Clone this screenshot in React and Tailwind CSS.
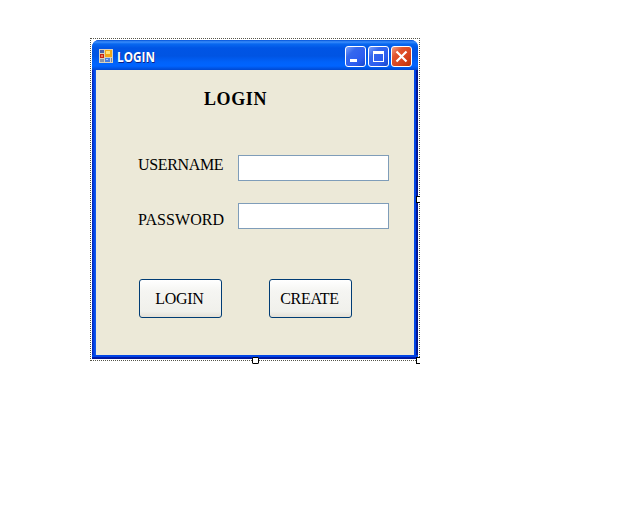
const serif = "font-['Liberation_Serif',serif] text-black whitespace-nowrap";

function CaptionButton({ danger, children }) {
  const tone = danger
    ? "bg-[linear-gradient(135deg,#f0a088_0%,#e2552f_30%,#d5401a_70%,#b93208_100%)]"
    : "bg-[linear-gradient(135deg,#7ba0fa_0%,#3568ee_30%,#2c5cf0_70%,#1846c8_100%)]";
  return (
    <button className={`h-[21px] w-[21px] rounded-[3px] border border-white ${tone}`}>
      <svg viewBox="0 0 19 19" className="block h-[19px] w-[19px]" shapeRendering="crispEdges">
        {children}
      </svg>
    </button>
  );
}

function AppIcon() {
  return (
    <svg viewBox="0 0 14 14" className="mt-[9px] h-[14px] w-[14px] shrink-0" shapeRendering="crispEdges">
      <rect width="14" height="14" fill="#d8d1bd" />
      <rect x="1" y="1" width="4" height="3" fill="#4a62a8" />
      <rect x="1" y="5" width="4" height="4" fill="#c62512" />
      <rect x="2" y="6" width="2" height="2" fill="#f27b55" />
      <rect x="6" y="1" width="7" height="7" fill="#f0a818" />
      <rect x="7" y="2" width="4" height="3" fill="#ffe27a" />
      <rect x="1" y="10" width="4" height="3" fill="#8a93a8" />
      <rect x="6" y="9" width="5" height="4" fill="#4a7de0" />
      <rect x="7" y="10" width="2" height="1" fill="#a8ccff" />
      <rect x="12" y="9" width="1" height="4" fill="#7c8499" />
    </svg>
  );
}

function Field({ label, type, className, labelClass }) {
  return (
    <div className={`flex h-[26px] items-start ${className}`}>
      <label className={`${serif} w-[100px] text-[16px] leading-[20px] ${labelClass}`}>{label}</label>
      <input type={type} className="h-[26px] w-[151px] border border-[#7f9db9] bg-white outline-none" />
    </div>
  );
}

function PushButton({ children }) {
  return (
    <button
      className={`${serif} h-[39px] w-[83px] rounded-[3px] border border-[#003c74] bg-[linear-gradient(#ffffff,#f5f5f2_30%,#f0f0eb_85%,#e4e0d6)] pr-[2px] text-[16px] leading-[20px] tracking-[-0.3px]`}
    >
      {children}
    </button>
  );
}

export default function App() {
  return (
    <div className="h-[512px] w-[640px] overflow-hidden bg-white">
      <div className="h-[400px] w-[420px] overflow-hidden pt-[38px] pl-[90px]">
        <div className="relative h-[323px] w-[330px] border border-dotted border-[#555549] p-px">
          <div className="flex h-[319px] w-[326px] flex-col overflow-hidden rounded-t-[7px] bg-[#0045e6]">
            <header className="flex h-[30px] shrink-0 bg-[linear-gradient(#0050d8_0px,#3a8dfb_2px,#0868f0_4px,#0055e5_8px,#0054e3_16px,#0062fa_22px,#0064ff_26px,#0048d0_30px)] pl-[7px]">
              <AppIcon />
              <span className="mt-[9px] ml-[4px] w-[228px] origin-left scale-x-[0.84] font-['Open_Sans',sans-serif] text-[14px] leading-[16px] font-bold text-white [text-shadow:1px_1px_0_#0a1f86]">
                LOGIN
              </span>
              <div className="mt-[6px] flex gap-[2px]">
                <CaptionButton>
                  <rect x="4" y="12" width="7" height="3" fill="white" />
                </CaptionButton>
                <CaptionButton>
                  <path d="M4 4h11v11H4zM5 7v7h9V7z" fill="white" fillRule="evenodd" />
                </CaptionButton>
                <CaptionButton danger>
                  <path d="M4.5 4.5L14.5 14.5M14.5 4.5L4.5 14.5" stroke="white" strokeWidth="2.2" shapeRendering="auto" />
                </CaptionButton>
              </div>
            </header>
            <div className="flex-1 bg-[linear-gradient(90deg,#001ea0_0px,#0831d9_1px,#0045e6_2px,#1660f0_4px,#0045e6_4px,#0045e6_322px,#0045e6_324px,#0019a0_324px,#00138c_326px)] px-[4px]">
              <main className="h-[285px] bg-[#ece9d8] pl-[42px]">
                <h1 className={`${serif} pt-[18px] pl-[66px] text-[18px] leading-[22px] font-bold tracking-[0.6px]`}>LOGIN</h1>
                <Field label="USERNAME" type="text" className="mt-[45px]" labelClass="tracking-[-0.35px]" />
                <Field label="PASSWORD" type="password" className="mt-[22px]" labelClass="pt-[7px] tracking-[0.05px]" />
                <div className="mt-[50px] ml-px flex gap-[47px]">
                  <PushButton>LOGIN</PushButton>
                  <PushButton>CREATE</PushButton>
                </div>
              </main>
              <div className="-mx-[4px] h-[4px] bg-[linear-gradient(#0045e6_0px,#0045e6_2px,#001cb4_2px,#00138c_4px)]" />
            </div>
          </div>
          <i className="absolute top-[157px] left-[325px] h-[7px] w-[7px] border border-black bg-white" />
          <i className="absolute top-[318px] left-[161px] h-[7px] w-[7px] rounded-[1px] border border-black bg-white" />
          <i className="absolute top-[318px] left-[325px] h-[7px] w-[7px] border border-black bg-white" />
        </div>
      </div>
    </div>
  );
}
